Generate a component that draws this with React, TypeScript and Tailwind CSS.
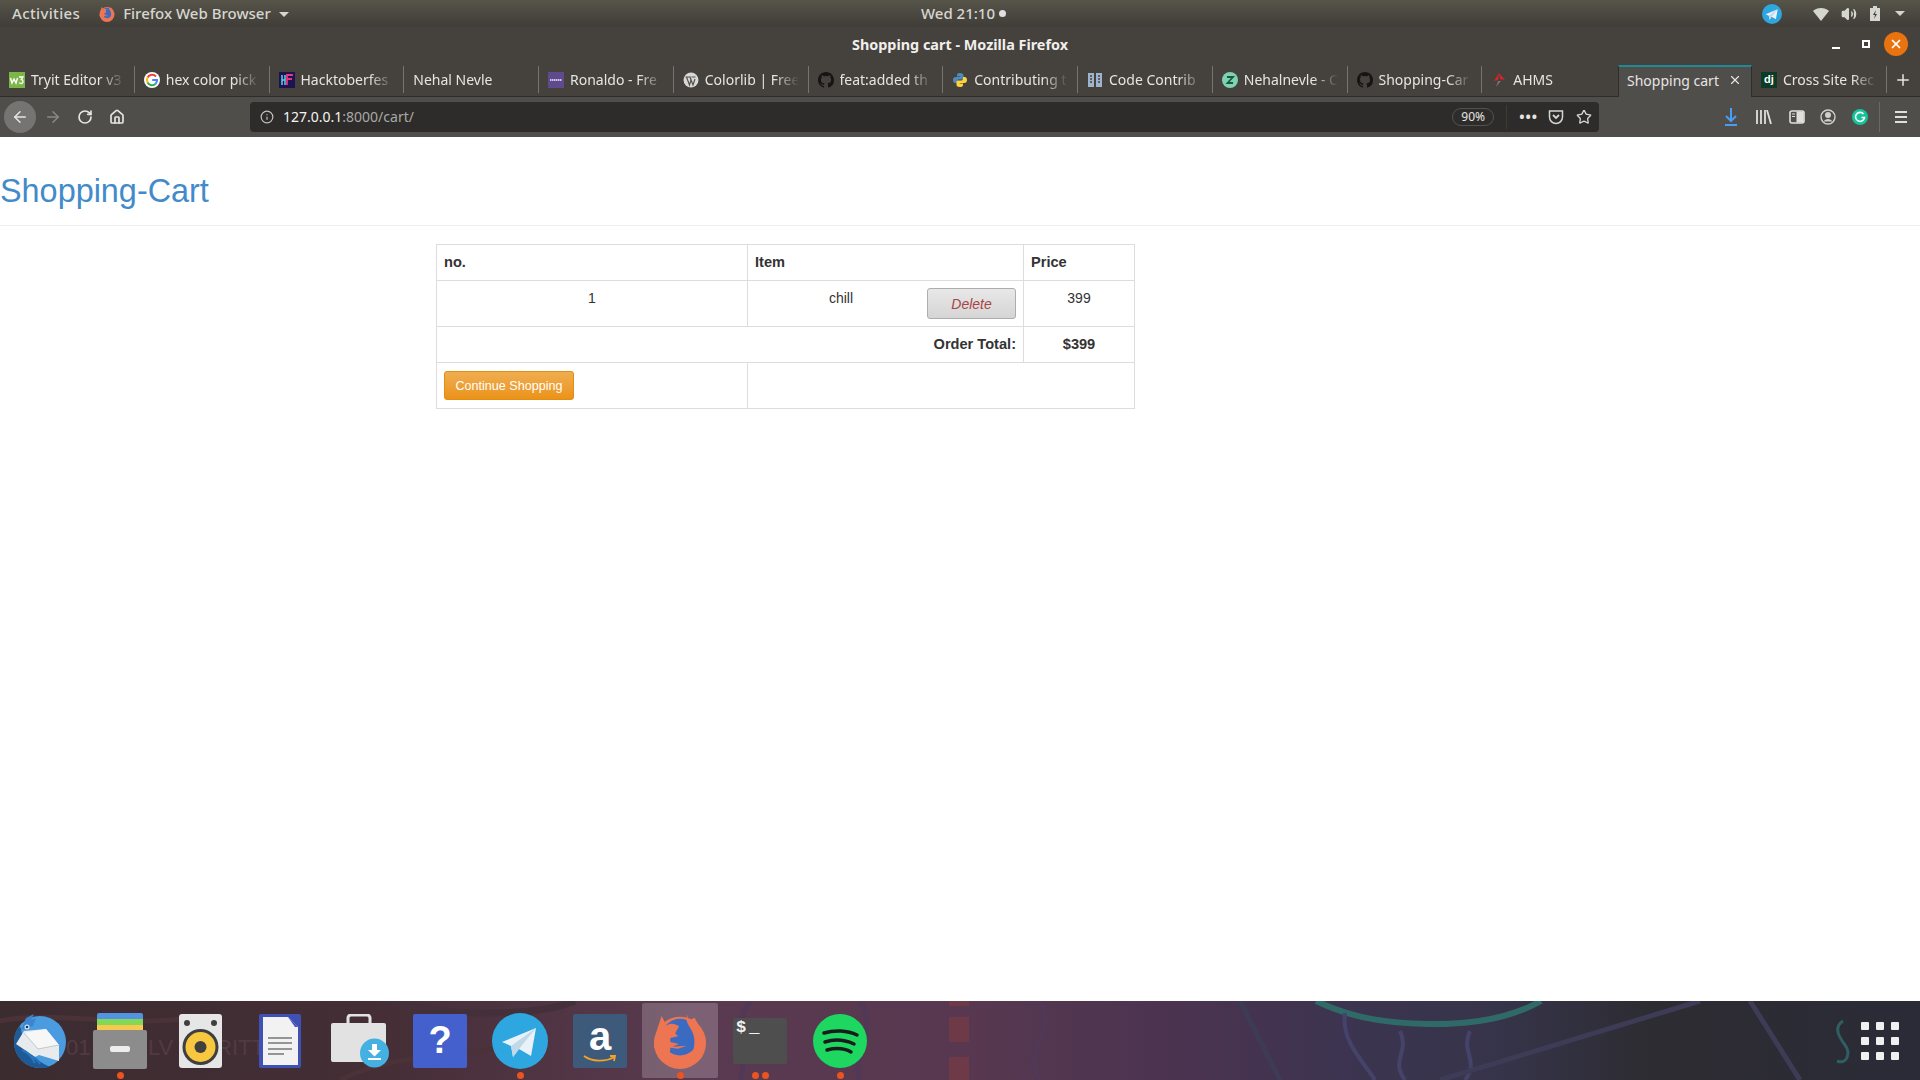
import { ArrowLeft, ArrowRight, RotateCw, Home, Info, Star, Plus, X, Volume2 } from 'lucide-react';

const uiFont = "font-['Noto_Sans',sans-serif]";

function W3Icon() {
  return (
    <svg width="16" height="16" viewBox="0 0 16 16">
      <rect width="16" height="16" fill="#7ab648" />
      <path d="M1.500 6l1.500 5 2-4 2 4 1.500-5" fill="none" stroke="#fff" strokeWidth="1.400" />
      <path d="M10 5h4l-1.700 2.500a2 2 0 1 1-2 3" fill="none" stroke="#fff" strokeWidth="1.300" />
    </svg>
  );
}

function GoogleIcon() {
  return (
    <svg width="16" height="16" viewBox="0 0 16 16">
      <circle cx="8" cy="8" r="8" fill="#fff" />
      <path d="M12 4.500A5 5 0 0 0 3.600 5.500" fill="none" stroke="#ea4335" strokeWidth="2" />
      <path d="M3.600 5.500a5 5 0 0 0 0 5" fill="none" stroke="#fbbc05" strokeWidth="2" />
      <path d="M3.600 10.500a5 5 0 0 0 8 1.300" fill="none" stroke="#34a853" strokeWidth="2" />
      <path d="M11.600 11.800A5 5 0 0 0 13 8H8.200" fill="none" stroke="#4285f4" strokeWidth="2" />
    </svg>
  );
}

function HackIcon() {
  return (
    <svg width="16" height="16" viewBox="0 0 16 16">
      <rect width="16" height="16" fill="#1d1350" />
      <path d="M3 3v10M6 3v10M3 8h3" stroke="#5ad1e8" strokeWidth="1.500" />
      <path d="M8 13V3h6M8 7h5" fill="none" stroke="#e9357f" strokeWidth="1.800" />
    </svg>
  );
}

function ColorlibIcon() {
  return (
    <svg width="16" height="16" viewBox="0 0 16 16">
      <rect width="16" height="16" fill="#5f4b8b" />
      <path d="M2 8h12" stroke="#cfc8e2" strokeWidth="2" strokeDasharray="1.500 0.500" />
    </svg>
  );
}

function WpIcon() {
  return (
    <svg width="16" height="16" viewBox="0 0 16 16">
      <circle cx="8" cy="8" r="7.500" fill="#d8d8d8" />
      <path d="M3.500 5l3 8 1.500-5-1-3M7 5l3 8 2-6M2.500 5h5M8.500 5h4" fill="none" stroke="#55524e" strokeWidth="1.200" />
    </svg>
  );
}

function GithubIcon() {
  return (
    <svg width="16" height="16" viewBox="0 0 16 16">
      <path
        fill="#161514"
        d="M8 0C3.580 0 0 3.580 0 8c0 3.540 2.290 6.530 5.470 7.590.4.070.55-.17.55-.38v-1.340c-2.230.48-2.690-1.070-2.690-1.070-.36-.92-.89-1.170-.89-1.170-.73-.5.060-.49.060-.49.810.06 1.230.83 1.230.83.710 1.220 1.870.87 2.330.66.070-.52.280-.87.510-1.070-1.780-.2-3.640-.89-3.640-3.950 0-.87.310-1.590.82-2.150-.08-.2-.36-1.020.08-2.120 0 0 .67-.21 2.200.82a7.600 7.600 0 0 1 4 0c1.530-1.040 2.200-.82 2.200-.82.440 1.100.16 1.920.08 2.120.51.560.82 1.270.82 2.150 0 3.070-1.870 3.750-3.650 3.950.290.250.540.730.540 1.480v2.200c0 .21.150.460.550.380A8 8 0 0 0 16 8c0-4.420-3.580-8-8-8z"
      />
    </svg>
  );
}

function PythonIcon() {
  return (
    <svg width="16" height="16" viewBox="0 0 16 16">
      <path d="M8 1C5 1 5 2.500 5 3v1.500h3.200V5H3.500C2 5 1 6.300 1 8s1 3 2.300 3H5V9.300C5 8 6 7.500 7 7.500h3c1 0 1.500-.7 1.500-1.500V3c0-1-1.300-2-3.500-2z" fill="#4b8bbe" />
      <path d="M8 15c3 0 3-1.500 3-2v-1.500H7.800V11h4.700c1.500 0 2.500-1.300 2.500-3s-1-3-2.300-3H11v1.700C11 8 10 8.500 9 8.500H6c-1 0-1.500.7-1.500 1.500v3c0 1 1.300 2 3.500 2z" fill="#ffd43b" />
    </svg>
  );
}

function BookIcon() {
  return (
    <svg width="14" height="16" viewBox="0 0 14 16">
      <rect x="0" y="1" width="14" height="14" fill="#9db4cc" />
      <rect x="6" y="1" width="2" height="14" fill="#45413d" />
      <path d="M2 4h2M2 7h2M2 10h2M10 4h2M10 7h2M10 10h2" stroke="#45413d" strokeWidth="1.400" />
    </svg>
  );
}

function ZulipIcon() {
  return (
    <svg width="16" height="16" viewBox="0 0 16 16">
      <circle cx="8" cy="8" r="8" fill="#7fd1b4" />
      <path d="M5 5h6L5.500 11H11" fill="none" stroke="#145a3c" strokeWidth="1.800" />
    </svg>
  );
}

function AhmsIcon() {
  return (
    <svg width="16" height="16" viewBox="0 0 16 16">
      <path d="M8 1l6 7-5-1z" fill="#d8232a" />
      <path d="M8 1L3 9l4-1z" fill="#d8232a" />
      <path d="M7 9l3 0-5 6z" fill="#77736e" />
    </svg>
  );
}

function DjangoIcon() {
  return (
    <span className="flex size-4 items-center justify-center bg-[#0c3c26] font-['Liberation_Sans',sans-serif] text-[11px] font-bold text-white">
      dj
    </span>
  );
}

const tabs = [
  { label: 'Tryit Editor v3', icon: <W3Icon /> },
  { label: 'hex color pick', icon: <GoogleIcon /> },
  { label: 'Hacktoberfes', icon: <HackIcon /> },
  { label: 'Nehal Nevle' },
  { label: 'Ronaldo - Fre', icon: <ColorlibIcon /> },
  { label: 'Colorlib | Free', icon: <WpIcon /> },
  { label: 'feat:added th', icon: <GithubIcon /> },
  { label: 'Contributing t', icon: <PythonIcon /> },
  { label: 'Code Contrib', icon: <BookIcon /> },
  { label: 'Nehalnevle - C', icon: <ZulipIcon /> },
  { label: 'Shopping-Car', icon: <GithubIcon /> },
  { label: 'AHMS', icon: <AhmsIcon /> },
];

function FirefoxLogo({ size }: { size: number }) {
  return (
    <svg width={size} height={size} viewBox="0 0 54 58">
      <circle cx="27" cy="31" r="27" fill="#ee7552" />
      <circle cx="27" cy="25" r="19" fill="#3a6bc0" />
      <path d="M8 3l5 10c4-3 9-2 13 1l-4 7 3 3-8 2v4l9 2-7 3 15-1-9 3-8-1c0 3-1 6-1 9L0 36 3 18z" fill="#ee7552" />
      <path d="M34 1l2 7 6-3 4 7c6 8 8 18 4 28L30 50c10-4 14-16 11-27-2-7-6-10-7-15z" fill="#ee7552" />
    </svg>
  );
}

function ThunderbirdIcon() {
  return (
    <svg width="54" height="54" viewBox="0 0 54 54">
      <circle cx="27" cy="28" r="26" fill="#4a9be0" />
      <path d="M1 28C1 22 3 16 7 12c3 10 4 26 24 38l6 3c-4 1-7 1-10 1C12 54 1 42 1 28z" fill="#1d5a96" />
      <path d="M8 16l5-12 8-4-3 6 5-2-3 8z" fill="#3b86cf" />
      <path d="M3 30l8-13 22-2 13 16v16l-20-6-4 2z" fill="#e8ebee" />
      <path d="M11 19l22-4 13 16-21 4z" fill="#f7f7f7" />
      <path d="M11 19l14 16 21-4" fill="none" stroke="#c3c8cc" strokeWidth="1" />
      <path d="M9 36c6 2 10 7 13 13M17 42c5 1 8 4 10 8" fill="none" stroke="#2a76be" strokeWidth="2" />
      <circle cx="14" cy="13" r="2.500" fill="#d8e6f2" />
      <circle cx="14" cy="13" r="1.300" fill="#16385a" />
    </svg>
  );
}

function FilesIcon() {
  return (
    <svg width="54" height="56" viewBox="0 0 54 56">
      <rect x="4" y="0" width="46" height="10" rx="2" fill="#5294e2" />
      <rect x="4" y="6" width="46" height="6" fill="#84d857" />
      <rect x="4" y="12" width="46" height="6" fill="#f8c94f" />
      <rect x="0" y="17" width="54" height="39" rx="2" fill="#8c8c8c" />
      <rect x="17" y="33" width="20" height="6" rx="2" fill="#ededed" />
    </svg>
  );
}

function RhythmboxIcon() {
  return (
    <svg width="43" height="54" viewBox="0 0 43 54">
      <rect width="43" height="54" rx="3" fill="#e6e6e6" />
      <circle cx="8" cy="9" r="3" fill="#3f3f3f" />
      <circle cx="35" cy="9" r="3" fill="#3f3f3f" />
      <circle cx="21.500" cy="33" r="18" fill="#3f3f3f" />
      <circle cx="21.500" cy="33" r="15" fill="#f6c73f" />
      <circle cx="21.500" cy="33" r="6" fill="#3f3f3f" />
    </svg>
  );
}

function WriterIcon() {
  return (
    <svg width="42" height="54" viewBox="0 0 42 54">
      <rect width="42" height="54" rx="2" fill="#3f51b5" />
      <path d="M4 3h25l10 10v38H4z" fill="#f2f2f2" />
      <path d="M29 3l10 10-3 0z" fill="#3f51b5" />
      <path d="M9 24h24M9 29h24M9 35h24M9 40h16" stroke="#777" strokeWidth="1.600" />
    </svg>
  );
}

function SoftwareIcon() {
  return (
    <svg width="58" height="54" viewBox="0 0 58 54">
      <path d="M17 10V4a3 3 0 0 1 3-3h16a3 3 0 0 1 3 3v6" fill="none" stroke="#e2e2e2" strokeWidth="3" />
      <rect x="0" y="9" width="55" height="39" rx="2" fill="#e2e2e2" />
      <circle cx="43.500" cy="39" r="14.500" fill="#45b1e3" />
      <path d="M41 30h5v6h4l-6.500 6.500L37 36h4zM37 44h13v2H37z" fill="#fff" />
    </svg>
  );
}

function HelpIcon() {
  return (
    <span className="flex h-[54px] w-[54px] items-center justify-center rounded-[2px] bg-[#4460cc] font-['Liberation_Sans',sans-serif] text-[38px] font-bold text-white">
      ?
    </span>
  );
}

function TelegramIcon({ size }: { size: number }) {
  return (
    <svg width={size} height={size} viewBox="0 0 56 56">
      <circle cx="28" cy="28" r="28" fill="#2ea6df" />
      <path d="M10 29L44 15 39 43 27 36 21 44l-2-11z" fill="#e8f2f8" />
      <path d="M19 33l25-18-17 21-6 8z" fill="#c0d8e8" />
    </svg>
  );
}

function AmazonIcon() {
  return (
    <div className="flex h-[54px] w-[54px] flex-col items-center rounded-[2px] bg-[#3d5a7a]">
      <span className="mt-[-2px] font-['Liberation_Sans',sans-serif] text-[40px] leading-[48px] font-bold text-white">a</span>
      <svg width="34" height="8" viewBox="0 0 34 8" className="mt-[-5px]">
        <path d="M1 1c8 6 22 6 30 1M27 1l5 0-1 5" fill="none" stroke="#f3a228" strokeWidth="1.800" />
      </svg>
    </div>
  );
}

function TerminalIcon() {
  return (
    <div className="flex h-[46px] w-[54px] items-start gap-[3px] rounded-[2px] bg-[#4e4e4e] px-[3px] pt-[1px] font-['Liberation_Mono',monospace] text-[17px] leading-[18px] font-bold text-[#f2f2f2]">
      <span>$</span>
      <span>_</span>
    </div>
  );
}

function SpotifyIcon() {
  return (
    <svg width="54" height="54" viewBox="0 0 54 54">
      <circle cx="27" cy="27" r="27" fill="#1ed760" />
      <path d="M11 19c10-3 23-3 33 2M12 28c9-3 20-2 29 2M14 36c8-2 17-2 24 2" fill="none" stroke="#1b1b1b" strokeWidth="3.500" strokeLinecap="round" />
    </svg>
  );
}

const dockItems = [
  { name: 'thunderbird', icon: <ThunderbirdIcon />, dots: 0 },
  { name: 'files', icon: <FilesIcon />, dots: 1 },
  { name: 'rhythmbox', icon: <RhythmboxIcon />, dots: 0 },
  { name: 'writer', icon: <WriterIcon />, dots: 0 },
  { name: 'software', icon: <SoftwareIcon />, dots: 0 },
  { name: 'help', icon: <HelpIcon />, dots: 0 },
  { name: 'telegram', icon: <TelegramIcon size={56} />, dots: 1 },
  { name: 'amazon', icon: <AmazonIcon />, dots: 0 },
  { name: 'firefox', icon: <FirefoxLogo size={56} />, dots: 1, active: true },
  { name: 'terminal', icon: <TerminalIcon />, dots: 2 },
  { name: 'spotify', icon: <SpotifyIcon />, dots: 1 },
];

function TopBar() {
  return (
    <div className={`grid h-[27px] grid-cols-[1fr_auto_1fr] items-center bg-gradient-to-b from-[#575449] to-[#403d39] text-[15px] font-medium text-[#d6d6d0] ${uiFont}`}>
      <div className="flex items-center">
        <span className="ml-3 tracking-[0.35px]">Activities</span>
        <span className="mr-2 ml-[19px]"><FirefoxLogo size={16} /></span>
        <span>Firefox Web Browser</span>
        <span className="mt-[1px] ml-2 h-0 w-0 border-x-[5px] border-t-[5px] border-x-transparent border-t-[#d6d6d0]" />
      </div>
      <div className="ml-[7px] flex items-center gap-1">
        <span>Wed 21:10</span>
        <span className="size-[7px] rounded-full bg-[#e0e0e0]" />
      </div>
      <div className="flex items-center justify-end">
        <TelegramIcon size={20} />
        <svg width="16" height="14" viewBox="0 0 16 14" className="ml-[31px]">
          <path d="M0 4c4-4 12-4 16 0l-8 10z" fill="#d6d6d0" />
        </svg>
        <Volume2 className="ml-[12px] size-4 fill-[#d6d6d0] text-[#d6d6d0]" />
        <svg width="10" height="15" viewBox="0 0 10 15" className="ml-[13px]">
          <path d="M3 0h4v2h3v13H0V2h3z" fill="#d6d6d0" />
          <path d="M6 4L3 9h2l-1 4 3-5H5z" fill="#403d39" />
        </svg>
        <span className="mr-[15px] ml-[15px] h-0 w-0 border-x-[5px] border-t-[5px] border-x-transparent border-t-[#d6d6d0]" />
      </div>
    </div>
  );
}

function TitleBar() {
  return (
    <div className={`relative flex h-[38px] items-center justify-center bg-[#45413d] pb-[3px] text-[14.4px] font-bold text-[#f0efec] ${uiFont}`}>
      <span>Shopping cart - Mozilla Firefox</span>
      <div className="absolute top-[5px] right-[12px] flex items-center">
        <span className="mt-[7px] mr-[22px] h-[2px] w-[8px] bg-white" />
        <span className="mr-[14px] size-[8px] border-2 border-white" />
        <span className="flex size-[24px] items-center justify-center rounded-full bg-[#e8730f]">
          <X className="size-[14px] text-white" strokeWidth={3} />
        </span>
      </div>
    </div>
  );
}

function TabBar() {
  return (
    <div className={`flex h-[32px] items-stretch border-b border-[#2f2d2b] bg-[#45413d] text-[14px] text-[#e6e5e2] ${uiFont}`}>
      {tabs.map((tab, i) => (
        <div key={tab.label} className="flex w-[134.75px] shrink-0 items-center pb-[2px] pl-[9px]">
          <div className={`flex min-w-0 flex-1 items-center gap-[6px] border-r py-[3px] pr-[7px] ${i === tabs.length - 1 ? 'border-transparent' : 'border-[#77736e]'}`}>
            {tab.icon && <span className="flex w-4 shrink-0 justify-center">{tab.icon}</span>}
            <span className="min-w-0 flex-1 whitespace-nowrap [mask-image:linear-gradient(to_right,black_72%,transparent_98%)]">{tab.label}</span>
          </div>
        </div>
      ))}
      <div className="mb-[-1px] ml-[1px] flex w-[134px] shrink-0 items-center justify-between border-x border-t-2 border-x-[#2f2d2b] border-t-[#1f8a96] bg-[#504e4b] pr-[9px] pb-[4px] pl-[8px]">
        <span className="whitespace-nowrap">Shopping cart</span>
        <X className="size-[14px]" strokeWidth={2} />
      </div>
      <div className="flex w-[134.75px] shrink-0 items-center pb-[2px] pl-[9px]">
        <div className="flex min-w-0 flex-1 items-center gap-[6px] border-r border-[#77736e] py-[3px] pr-[7px]">
          <span className="shrink-0"><DjangoIcon /></span>
          <span className="min-w-0 flex-1 whitespace-nowrap [mask-image:linear-gradient(to_right,black_72%,transparent_98%)]">Cross Site Rec</span>
        </div>
      </div>
      <div className="flex flex-1 items-center justify-center pb-[2px]">
        <Plus className="size-[18px]" strokeWidth={2} />
      </div>
    </div>
  );
}

function NavBar() {
  return (
    <div className={`flex h-[40px] items-center bg-[#504e4b] text-[#e6e5e2] ${uiFont}`}>
      <span className="ml-[4px] flex size-[32px] items-center justify-center rounded-full bg-[#767472]">
        <ArrowLeft className="size-[18px]" />
      </span>
      <ArrowRight className="ml-[8px] size-[18px] text-[#8b8986]" />
      <RotateCw className="ml-[15px] size-[16px]" strokeWidth={2.5} />
      <Home className="ml-[16px] size-[16px]" strokeWidth={2.5} />

      <div className="ml-[125px] flex h-[30px] w-[1349px] items-center rounded-[4px] bg-[#2d2c2a] pr-[7px] pl-[10px]">
        <Info className="size-[14px] text-[#c4c3c0]" />
        <span className="ml-[9px] pb-[1px] text-[14px] text-[#f4f4f2]">
          127.0.0.1<span className="text-[#a9a8a5]">:8000/cart/</span>
        </span>
        <span className="ml-auto flex h-[18px] w-[42px] items-center justify-center rounded-full border border-[#54524f] text-[12px]">90%</span>
        <span className="ml-[12px] h-[24px] w-px bg-[#3d3c3a]" />
        <span className="ml-[12px] text-[14px] leading-[8px] font-bold tracking-[1px]">•••</span>
        <svg width="16" height="16" viewBox="0 0 16 16" className="ml-[10px]">
          <path d="M1.500 2h13v6a6.500 6.500 0 0 1-13 0z" fill="none" stroke="#d6d5d2" strokeWidth="1.500" />
          <path d="M5 6l3 3 3-3" fill="none" stroke="#d6d5d2" strokeWidth="1.800" />
        </svg>
        <Star className="ml-[12px] size-[16px] text-[#d6d5d2]" strokeWidth={2} />
      </div>

      {/* toolbar icons on the right */}
      <svg width="14" height="18" viewBox="0 0 14 18" className="ml-[125px]">
        <path d="M7 0v13M2 8l5 5 5-5" fill="none" stroke="#4a9df0" strokeWidth="2" />
        <path d="M1 17h12" stroke="#4a9df0" strokeWidth="2" />
      </svg>
      <svg width="16" height="14" viewBox="0 0 16 14" className="ml-[18px]">
        <path d="M1 0v14M5 0v14M9 0v14M11 0l4 14" stroke="#e0dfdc" strokeWidth="1.800" fill="none" />
      </svg>
      <svg width="16" height="14" viewBox="0 0 16 14" className="ml-[17px]">
        <rect x="1" y="1" width="14" height="12" rx="2" fill="none" stroke="#e0dfdc" strokeWidth="1.600" />
        <rect x="7.500" y="1.500" width="7" height="11" fill="#e0dfdc" />
        <path d="M3 4h3M3 6.500h3" stroke="#e0dfdc" strokeWidth="1" />
      </svg>
      <svg width="16" height="16" viewBox="0 0 16 16" className="ml-[15px]">
        <circle cx="8" cy="8" r="7" fill="none" stroke="#d0cfcc" strokeWidth="1.400" />
        <circle cx="8" cy="6" r="3" fill="#d0cfcc" />
        <path d="M3.500 12.500c2-3.500 7-3.500 9 0z" fill="#d0cfcc" />
      </svg>
      <svg width="16" height="16" viewBox="0 0 16 16" className="ml-[16px]">
        <circle cx="8" cy="8" r="8" fill="#15c39a" />
        <path d="M11.500 5A4.500 4.500 0 1 0 12.500 8.500H9.500" fill="none" stroke="#fff" strokeWidth="1.600" />
      </svg>
      <span className="ml-[11px] h-[30px] w-px bg-[#6b6966]" />
      <svg width="12" height="12" viewBox="0 0 12 12" className="ml-[15px]">
        <path d="M0 1h12M0 6h12M0 11h12" stroke="#e0dfdc" strokeWidth="2" />
      </svg>
    </div>
  );
}

function CartTable() {
  const cell = 'border border-[#ddd] px-[7px]';
  return (
    <table className="ml-[436px] w-[698px] table-fixed border-collapse text-[14px] leading-[20px] text-[#333]">
      <colgroup>
        <col className="w-[311px]" />
        <col className="w-[276px]" />
        <col className="w-[111px]" />
      </colgroup>
      <tbody>
        <tr className="h-[36px] text-[14.6px]">
          <th className={`${cell} pb-[1px] text-left align-middle`}>no.</th>
          <th className={`${cell} pb-[1px] text-left align-middle`}>Item</th>
          <th className={`${cell} pb-[1px] text-left align-middle`}>Price</th>
        </tr>
        <tr className="h-[46px]">
          <td className={`${cell} pt-[7px] text-center align-top`}>1</td>
          <td className={`${cell} pt-[7px] align-top`}>
            <div className="flex items-start">
              <span className="flex-1 text-center">chill</span>
              <button className="h-[31px] w-[89px] rounded-[3px] border border-[#adadad] bg-gradient-to-b from-[#e8e8e8] to-[#d5d5d5] text-[14px] text-[#a94442] italic">
                Delete
              </button>
            </div>
          </td>
          <td className={`${cell} pt-[7px] text-center align-top`}>399</td>
        </tr>
        <tr className="h-[36px] text-[14.6px]">
          <td colSpan={2} className={`${cell} pb-[1px] text-right align-middle font-bold`}>Order Total:</td>
          <td className={`${cell} pb-[1px] text-center align-middle font-bold`}>$399</td>
        </tr>
        <tr className="h-[46px]">
          <td className={`${cell} align-middle`}>
            <button className="flex h-[29px] w-[130px] items-center justify-center rounded-[3px] border border-[#e38d13] bg-gradient-to-b from-[#f0ad4e] to-[#eb9316] text-[12.6px] text-white">
              Continue Shopping
            </button>
          </td>
          <td colSpan={2} className={cell} />
        </tr>
      </tbody>
    </table>
  );
}

function Dock() {
  return (
    <div className="relative flex h-[79px] shrink-0 items-stretch overflow-hidden bg-[linear-gradient(to_right,#3b2c30_0%,#452e36_20%,#5a3a50_36%,#583850_50%,#4a3350_62%,#3c3450_70%,#36344a_78%,#2d2c32_86%,#2b2b38_100%)]">
      {/* wallpaper behind the dock */}
      <svg className="absolute inset-0" width="1920" height="79" viewBox="0 0 1920 79">
        <text x="66" y="54" fontSize="22" fontFamily="Liberation Sans, sans-serif" fill="#533a42">01</text>
        <text x="148" y="54" fontSize="22" fontFamily="Liberation Sans, sans-serif" fill="#533a42">LV</text>
        <text x="216" y="54" fontSize="22" fontFamily="Liberation Sans, sans-serif" fill="#533a42">RITT</text>
        <path d="M390 0c40 14 140 18 185 0" fill="none" stroke="#43303a" strokeWidth="7" />
        <path d="M0 20c60-12 130 10 210-6M340 79c60-30 120-20 200-40" fill="none" stroke="#4a3238" strokeWidth="5" />
        <path d="M740 79c10-30-10-50 10-79M860 79c-10-20 20-50 0-79M1040 79c-20-30 20-50 0-79" fill="none" stroke="#503856" strokeWidth="5" />
        <path d="M1316 0c30 14 60 22 112 23 56 1 90-10 113-23" fill="none" stroke="#2f6a68" strokeWidth="6" />
        <path d="M1345 12c-4 30 20 50 30 67M1400 30c10 20-10 30 5 49M1470 30c-10 20 10 30 -5 49" fill="none" stroke="#46436a" strokeWidth="4" />
        <rect x="949" y="0" width="20" height="5" fill="#6e3a48" />
        <rect x="949" y="16" width="20" height="25" fill="#6e3a48" />
        <rect x="949" y="56" width="20" height="23" fill="#6e3a48" />
        <path d="M1280 79l-40-79M1440 79l260-79M1800 79l-50-79" stroke="#3d3b55" strokeWidth="5" fill="none" />
        <path d="M1843 20c-10 6-4 16 2 24s2 20-8 16" fill="none" stroke="#2f5f62" strokeWidth="3" />
      </svg>

      {dockItems.map((item) => (
        <div key={item.name} className="relative flex w-20 shrink-0 items-center justify-center">
          {item.active && <span className="absolute inset-x-[2px] top-[2px] bottom-[2px] rounded-[2px] bg-white/20" />}
          <span className="relative">{item.icon}</span>
          {item.dots > 0 && (
            <span className="absolute bottom-[1px] flex gap-[3px]">
              {Array.from({ length: item.dots }, (_, i) => (
                <span key={i} className="size-[7px] rounded-full bg-[#e95420]" />
              ))}
            </span>
          )}
        </div>
      ))}

      <div className="relative mr-[21px] ml-auto grid grid-cols-3 content-center gap-[7px]">
        {Array.from({ length: 9 }, (_, i) => (
          <span key={i} className="size-[8px] rounded-[1px] bg-[#f0f0f0]" />
        ))}
      </div>
    </div>
  );
}

export default function App() {
  return (
    <div className="flex h-screen w-screen flex-col overflow-hidden bg-white font-['Liberation_Sans',sans-serif]">
      <TopBar />
      <TitleBar />
      <TabBar />
      <NavBar />
      <main className="min-h-0 flex-1">
        <h1 className="h-[89px] border-b border-[#eee] pt-[34px] text-[32.4px] leading-[40px] font-normal text-[#428bca]">Shopping-Cart</h1>
        <div className="mt-[18px]">
          <CartTable />
        </div>
      </main>
      <Dock />
    </div>
  );
}
